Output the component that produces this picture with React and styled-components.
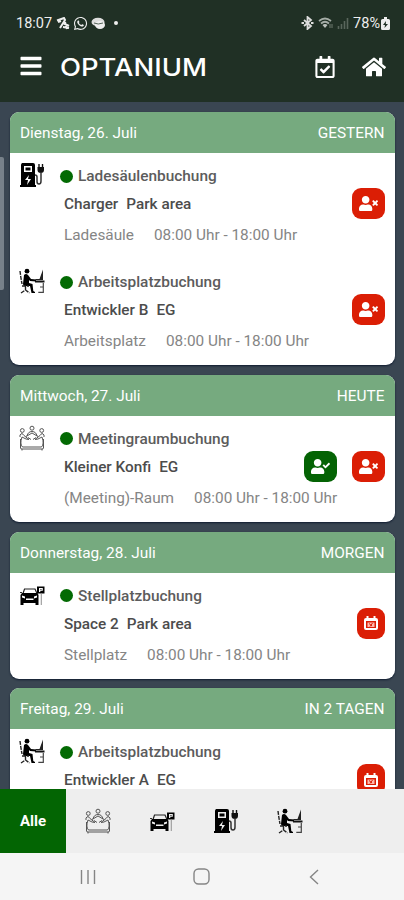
import React from 'react'
import styled, { createGlobalStyle } from 'styled-components'
import { FaBars, FaHome, FaRegCalendarCheck, FaUserCheck, FaUserTimes, FaWhatsapp } from 'react-icons/fa'

const days = [
    {
        date: 'Dienstag, 26. Juli', label: 'GESTERN',
        bookings: [
            { kind: 'charger', title: 'Ladesäulenbuchung', place: 'Charger', area: 'Park area', type: 'Ladesäule', actions: ['userTimes'] },
            { kind: 'desk', title: 'Arbeitsplatzbuchung', place: 'Entwickler B', area: 'EG', type: 'Arbeitsplatz', actions: ['userTimes'] },
        ],
    },
    {
        date: 'Mittwoch, 27. Juli', label: 'HEUTE',
        bookings: [
            { kind: 'meeting', title: 'Meetingraumbuchung', place: 'Kleiner Konfi', area: 'EG', type: '(Meeting)-Raum', actions: ['userCheck', 'userTimes'] },
        ],
    },
    {
        date: 'Donnerstag, 28. Juli', label: 'MORGEN',
        bookings: [
            { kind: 'parking', title: 'Stellplatzbuchung', place: 'Space 2', area: 'Park area', type: 'Stellplatz', actions: ['calendar'] },
        ],
    },
    {
        date: 'Freitag, 29. Juli', label: 'IN 2 TAGEN',
        bookings: [
            { kind: 'desk', title: 'Arbeitsplatzbuchung', place: 'Entwickler A', area: 'EG', actions: ['calendar'] },
        ],
    },
]

const icons = { charger: ChargerIcon, desk: DeskIcon, meeting: MeetingIcon, parking: ParkingIcon }

function ChargerIcon() {
    return (
        <KindIcon viewBox='0 0 26 26'>
            <path fillRule='evenodd' d='M3 1h11q2 0 2 2v20h1v2H1v-2h1V3q0-1 1-2zm2 3v6h8V4zm5 9-4 5h3l-1 5 4-6H9z' fill='#000' />
            <path d='M6.5 5.5h5v3h-5z' fill='#000' />
            <path d='M18.5 5H25v3q0 3-3.200 3t-3.300-3z' fill='#111' />
            <path d='M20 5V2M23.500 5V2' stroke='#111' strokeWidth='1.400' fill='none' />
            <path d='M22 10v9q0 3-2 3t-2-2.500V15q0-2-2-2' stroke='#333' strokeWidth='1.500' fill='none' />
        </KindIcon>
    )
}

function DeskIcon() {
    return (
        <KindIcon viewBox='0 0 26 26'>
            <circle cx='8' cy='3.200' r='2.400' fill='#000' />
            <path d='M5 7q2-2 4 0l3 4 5 .5v2l-6-.5-1-1v3l3.500 1 .8 7 1.700 1v1h-3.500l-1.500-7H6q-2 0-2-2z' fill='#000' />
            <path d='M1 3l.8 6 1.200 7M3 18h7M6.500 18v4M2 25l4.500-3 4 3' stroke='#222' strokeWidth='1.400' fill='none' strokeDasharray='4 1' />
            <path d='M16 12.500h9.500v2H16z' fill='#111' />
            <path d='M24 1.500 20.500 11h-4v1H24z' fill='#222' />
            <path d='M24.300 15v9.300h-5M24 19h-3' stroke='#444' strokeWidth='1.200' fill='none' />
        </KindIcon>
    )
}

function MeetingIcon() {
    return (
        <KindIcon viewBox='0 0 26 26'>
            <g fill='none' stroke='#555' strokeWidth='1'>
                <circle cx='13' cy='3.200' r='2' />
                <circle cx='3.300' cy='5.500' r='1.900' />
                <circle cx='22.700' cy='5.500' r='1.900' />
                <path d='M8 11q1-4.500 5-4.500t5 4.500M7 11.500 13 8l6 3.500' />
                <path d='M1 12v-2q2-3 4 .5l5 4-3-.5-4-2q-2.500 7 .5 10h19q3-3 .5-10l-4 2-3 .5 5-4q2-3.500 4-.5v2' />
                <path d='M9 12.500l3 2M17 12.500l-3 2M1.500 14v9q0 1 1.500 1h20q1.500 0 1.500-1v-9M3 24v1.500M23 24v1.500' />
            </g>
        </KindIcon>
    )
}

function ParkingIcon() {
    return (
        <KindIcon viewBox='0 0 26 26'>
            <path d='M4 11.500 5.500 7h10.500l2 4.500' stroke='#222' strokeWidth='1.200' fill='none' />
            <path fillRule='evenodd' d='M3 11h15.500l1 2v10h-3v-2H4.500v2h-3V13zm0 2.500v2l3 1v-2zm15 0-3 1v2l3-1zM7 16.500h7.500V18H7z' fill='#000' />
            <path d='M1 10.500h2M18 10.500h2' stroke='#333' />
            <path fillRule='evenodd' d='M18 4.500h7.500v7H18zm2 1.500v4h1.300V8.700h2.500V6zm1.300 1h1.300v.7h-1.300z' fill='#000' />
            <path d='M22.300 11.500V23' stroke='#999' strokeWidth='1.100' />
        </KindIcon>
    )
}

function CalendarCancelIcon() {
    return (
        <svg width='14' height='16' viewBox='0 0 14 16'>
            <path fillRule='evenodd' d='M2.500 1h2v2h5V1h2v2H12q2 0 2 2v8q0 2-2 2H2q-2 0-2-2V5q0-2 2-2h.5zM2 6v7h10V6z' fill='#fff' />
            <path d='M3.500 7.500h7v4.500h-7z' fill='#ffb9ad' />
            <path d='M5 8.500 8 11M8.500 8 6 11.500' stroke='#db1e05' />
        </svg>
    )
}

const actionIcons = { userTimes: FaUserTimes, userCheck: FaUserCheck, calendar: CalendarCancelIcon }

function Booking({ kind, title, place, area, type, actions }) {
    const Kind = icons[kind]
    return (
        <Row>
            <Kind />
            <Details>
                <Title><Dot />{title}</Title>
                <Place><span>{place}</span><span>{area}</span></Place>
                {type && <Time><span>{type}</span><span>08:00 Uhr - 18:00 Uhr</span></Time>}
            </Details>
            <Actions>
                {actions.map((name) => {
                    const Icon = actionIcons[name]
                    return (
                        <Action key={name} $green={name === 'userCheck'} $small={name === 'calendar'}>
                            <Icon size={19} />
                        </Action>
                    )
                })}
            </Actions>
        </Row>
    )
}

function App() {
    return (
        <Screen>
            <GlobalStyle />
            <Header>
                <StatusBar>
                    <StatusLeft>
                        <Clock>18:07</Clock>
                        <svg width='14' height='13' viewBox='0 0 14 13'>
                            <path d='M1 3.500 8 1l1 2-5 8M2 5l3-1M7 6l6 3M9 5l2 7M7 10l6 1' stroke='#eee' strokeWidth='2' fill='none' />
                        </svg>
                        <FaWhatsapp size={15} />
                        <svg width='15' height='13' viewBox='0 0 15 13'>
                            <ellipse cx='7' cy='5' rx='6.500' ry='4.300' fill='#ddd' />
                            <ellipse cx='9' cy='8' rx='5' ry='4' fill='#eee' />
                            <path d='M3 6q4 2 9 0' stroke='#526056' fill='none' />
                        </svg>
                        <More />
                    </StatusLeft>
                    <StatusRight>
                        <svg width='13' height='14' viewBox='0 0 13 14'>
                            <path d='M3 4l7 6-3.500 3V1L10 4 3 10' stroke='#ddd' strokeWidth='1.800' fill='none' />
                            <path d='M.5 7h2.500M10 7h2.500' stroke='#ddd' strokeWidth='2' />
                        </svg>
                        <svg width='15' height='12' viewBox='0 0 15 12'>
                            <path d='M1 4q6-5 12 0M3 6.500q4-3.500 8 0' stroke='#a5ada7' strokeWidth='1.700' fill='none' />
                            <path d='M4.500 8q2.500-2 5 0L7 11z' fill='#bbc0bc' />
                            <path d='M12 7v4M14 7v4' stroke='#6e7a71' />
                        </svg>
                        <svg width='12' height='12' viewBox='0 0 12 12'>
                            <path d='M1.500 9v3M4.500 7v5M7.500 4v8M10.500 1v11' stroke='#59665c' strokeWidth='1.600' />
                        </svg>
                        <Percent>78%</Percent>
                        <svg width='9' height='13' viewBox='0 0 9 13'>
                            <path fillRule='evenodd' d='M3 0h3v2h1.500q1.500 0 1.500 1.500v8q0 1.500-1.500 1.500h-6Q0 13 0 11.500v-8Q0 2 1.500 2H3zm2 4L2 8h2l-.5 3L7 7H4.800z' fill='#eee' />
                        </svg>
                    </StatusRight>
                </StatusBar>
                <TitleBar>
                    <FaBars size={24} />
                    <Logo width='148' height='26' viewBox='0 0 148 26'>
                        <text x='0' y='22' textLength='147' lengthAdjust='spacingAndGlyphs'>OPTANIUM</text>
                    </Logo>
                    <FaRegCalendarCheck size={22} />
                    <FaHome size={24} />
                </TitleBar>
            </Header>
            <List>
                {days.map((day) => (
                    <Card key={day.date}>
                        <CardHeader>
                            <span>{day.date}</span>
                            <span>{day.label}</span>
                        </CardHeader>
                        {day.bookings.map((booking) => <Booking key={booking.title} {...booking} />)}
                    </Card>
                ))}
                <ScrollThumb />
            </List>
            <Filters>
                <AllTab>Alle</AllTab>
                <Tab><MeetingIcon /></Tab>
                <Tab><ParkingIcon /></Tab>
                <Tab><ChargerIcon /></Tab>
                <Tab><DeskIcon /></Tab>
            </Filters>
            <NavBar>
                <svg width='16' height='16' viewBox='0 0 16 16'><path d='M1.500 1v14M8 1v14M14.500 1v14' /></svg>
                <svg width='17' height='17' viewBox='0 0 17 17'><rect x='1' y='1' width='15' height='15' rx='4.500' /></svg>
                <svg width='10' height='16' viewBox='0 0 10 16'><path d='M9 1 1.500 8 9 15' /></svg>
            </NavBar>
        </Screen>
    )
}

export default App

const GlobalStyle = createGlobalStyle`
    * {
        box-sizing: border-box;
    }
    body {
        margin: 0;
        font-family: Roboto, sans-serif;
    }
`
const Screen = styled.div`
    width: 404px;
    height: 900px;
    display: flex;
    flex-direction: column;
    overflow: hidden;
    background: #3a4652;
`
const Header = styled.header`
    height: 102px;
    flex: none;
    padding-top: 13px;
    background: #203025;
    color: #fff;
`
const StatusBar = styled.div`
    height: 20px;
    padding: 0 14px 0 16px;
    display: flex;
    justify-content: space-between;
    color: #eee;
`
const StatusLeft = styled.div`
    display: flex;
    align-items: center;
    gap: 3px;
`
const StatusRight = styled.div`
    display: flex;
    align-items: center;
    gap: 4px;
`
const Clock = styled.span`
    font-size: 14.5px;
    margin-right: 1px;
`
const More = styled.i`
    width: 4px;
    height: 4px;
    margin-left: 5px;
    border-radius: 50%;
    background: #eee;
`
const Percent = styled.span`
    font-size: 14.5px;
    margin: 0 -3px 0 0;
`
const TitleBar = styled.div`
    height: 44px;
    margin-top: 12px;
    padding: 0 18px 0 19px;
    display: flex;
    align-items: center;
    > svg:first-child {
        margin-top: -3px;
    }
    > svg:nth-child(3) {
        margin-left: auto;
        margin-right: 26px;
    }
`
const Logo = styled.svg`
    margin-left: 17px;
    overflow: visible;
    text {
        font: 500 24.5px Inter, sans-serif;
        fill: #fff;
    }
`
const List = styled.main`
    position: relative;
    flex: 1;
    min-height: 0;
    overflow: hidden;
    padding: 10px 9px 0 10px;
    display: flex;
    flex-direction: column;
    gap: 9.7px;
`
const Card = styled.section`
    flex: none;
    border-radius: 9px;
    overflow: hidden;
    background: #fff;
    box-shadow: 0 1px 2px #101c30;
`
const CardHeader = styled.div`
    height: 41px;
    padding: 1px 10.5px 0 10px;
    display: flex;
    align-items: center;
    justify-content: space-between;
    background: #76aa7f;
    color: #fff;
    font-size: 15.4px;
`
const Row = styled.div`
    height: 106.05px;
    padding: 9px 10px 0 9px;
    display: flex;
`
const KindIcon = styled.svg`
    width: 26px;
    height: 26px;
    flex: none;
`
const Details = styled.div`
    flex: 1;
    padding-left: 15px;
    white-space: nowrap;
`
const Title = styled.div`
    height: 28px;
    display: flex;
    align-items: center;
    font-size: 15.4px;
    font-weight: 500;
    color: #5c5c5c;
`
const Dot = styled.i`
    width: 13px;
    height: 13px;
    margin-right: 5px;
    border-radius: 50%;
    background: #036a03;
`
const Place = styled.div`
    height: 28px;
    padding-left: 4px;
    display: flex;
    align-items: center;
    gap: 8px;
    font-size: 15.3px;
    font-weight: 500;
    color: #4c4c4c;
`
const Time = styled.div`
    height: 34px;
    padding-left: 4px;
    display: flex;
    align-items: center;
    gap: 20px;
    font-size: 15.35px;
    color: #858585;
`
const Actions = styled.div`
    width: 0;
    padding-top: 26px;
    display: flex;
    justify-content: flex-end;
    gap: 15px;
`
const Action = styled.button`
    width: ${(props) => (props.$small ? 28 : 33)}px;
    height: 31px;
    padding: 0;
    flex: none;
    display: flex;
    align-items: center;
    justify-content: center;
    border: 0;
    border-radius: 9px;
    background: ${(props) => (props.$green ? '#046304' : '#db1e05')};
    color: #fff;
`
const ScrollThumb = styled.div`
    position: absolute;
    left: 0;
    top: 55px;
    width: 4px;
    height: 133px;
    border-radius: 0 2px 2px 0;
    background: #77818a;
`
const Filters = styled.nav`
    height: 64px;
    flex: none;
    display: flex;
    background: #eee;
`
const AllTab = styled.div`
    width: 66px;
    padding-bottom: 1px;
    display: flex;
    align-items: center;
    justify-content: center;
    background: #036503;
    color: #fff;
    font-size: 15px;
    font-weight: 700;
`
const Tab = styled.div`
    width: 64px;
    display: flex;
    align-items: center;
    justify-content: center;
`
const NavBar = styled.footer`
    height: 47px;
    flex: none;
    padding: 0 85px 0 80px;
    display: flex;
    align-items: center;
    justify-content: space-between;
    background: #f5f5f5;
    svg {
        fill: none;
        stroke: #858585;
        stroke-width: 1.4;
    }
    svg:nth-child(2) {
        margin-left: -3px;
    }
`
